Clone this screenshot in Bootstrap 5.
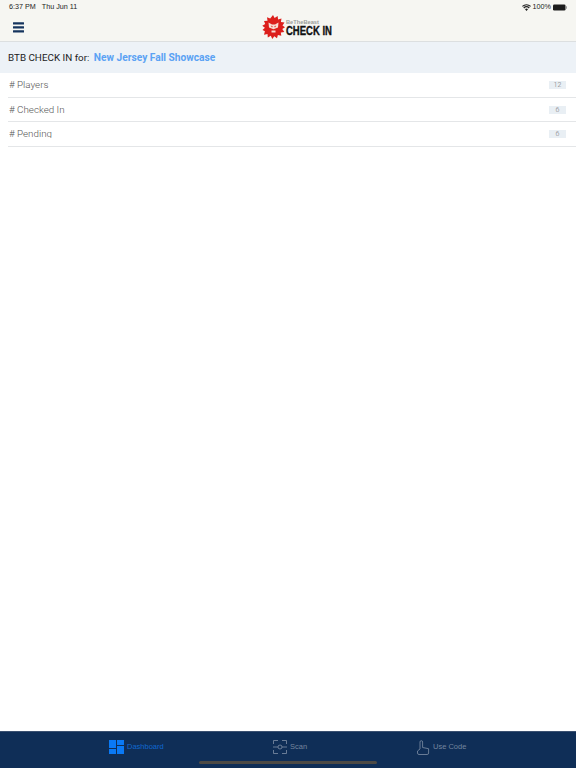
<!DOCTYPE html>
<html lang="en">
<head>
<meta charset="utf-8">
<title>BTB Check In</title>
<link href="https://cdn.jsdelivr.net/npm/bootstrap@5.3.0/dist/css/bootstrap.min.css" rel="stylesheet">
<style>
html,body{height:768px;overflow:hidden;background:#fff}
body{font-family:"Liberation Sans",Arial,sans-serif;display:flex;flex-direction:column}
.topbar{background:#f6f6f2;height:42px;border-bottom:1px solid #dcdfe0;flex:none;position:relative}
.status-row{height:14px;padding:0 9px 0 9px;font-size:7.2px;color:#222;line-height:14px}
.status-row .gap-time{margin-right:6px}
.status-icons{gap:2px}
.burger{width:11px;margin-left:13px;margin-top:8px;display:block}
.logo-wrap{position:absolute;left:262px;top:15px;height:24px}
.logo-txt{margin-left:1px;padding-top:4px}
.logo-top{font-size:5.7px;font-weight:700;color:#9a9d9a;height:6px;line-height:6px}
.logo-main{font-size:12.5px;font-weight:700;color:#111;line-height:11px;height:11px;margin-top:.5px;transform:scaleX(.76);transform-origin:left center;white-space:nowrap;-webkit-text-stroke:.35px #111;width:46px}
.event-bar{background:#edf2f7;height:31px;flex:none;padding-left:8px;font-family:Roboto,sans-serif;font-size:9.85px;line-height:31px;color:#1c1c1c}
.event-name{color:#5ba2f4;font-weight:700;margin-left:2px;font-size:10.2px}
.stat-list{padding:.5px 0 0 8px;flex:none}
.stat-row{height:24.4px;border-bottom:1px solid #e4e6e8;padding:0 10px 0 1px;font-family:Roboto,sans-serif;font-weight:300;font-size:9.8px;color:#555;overflow:hidden}
.stat-label{line-height:24px}
.stat-row:last-child .stat-label{height:16px;line-height:24px;align-self:flex-start}
.stat-num{background:#e9eff4;color:#777;font-size:7px;width:17px;height:8px;line-height:8px;text-align:center}
.spacer-main{flex:1}
.tabbar{background:#0f2e57;height:37px;flex:none;position:relative;border-top:1px solid #3a5070;font-size:7.5px;color:#74859e}
.tab-item{position:absolute;top:8px;height:14px}
.tab-dash{left:109px;color:#0f68d0;gap:3px}
.tab-scan{left:273px;gap:3px}
.tab-code{left:417px;gap:3px}
.home-ind{position:absolute;left:199px;bottom:4px;width:178px;height:3px;background:#4d4a45;border-radius:2px}
</style>
</head>
<body>
<header class="topbar">
  <div class="status-row d-flex justify-content-between align-items-center">
    <div><span class="gap-time">6:37 PM</span>Thu Jun 11</div>
    <div class="d-flex align-items-center status-icons">
      <svg width="9" height="7" viewBox="0 0 18 14"><path d="M9 14 6 10.600a4.400 4.400 0 0 1 6 0zM4.400 8.800 2.600 6.800a9.400 9.400 0 0 1 12.800 0l-1.800 2a6.800 6.800 0 0 0-9.200 0zM1.500 5.700 0 4a13.400 13.400 0 0 1 18 0l-1.500 1.700a11.200 11.200 0 0 0-15 0z" fill="#222"/></svg>
      <span>100%</span>
      <svg width="14" height="7" viewBox="0 0 14 7"><rect x="0" y="0.500" width="12.500" height="6" rx="1.300" fill="#1c1c1c"/><rect x="13" y="2.300" width="1" height="2.400" fill="#999"/></svg>
    </div>
  </div>
  <svg class="burger" width="11" height="11" viewBox="0 0 11 11"><rect width="11" height="2.400" y="0.200" rx=".4" fill="#15345e"/><rect width="11" height="2.400" y="4.200" rx=".4" fill="#15345e"/><rect width="11" height="2.400" y="8.200" rx=".4" fill="#15345e"/></svg>
  <div class="logo-wrap d-flex">
    <svg width="23" height="24" viewBox="0 0 23 24">
      <path fill="#dc1f1c" d="M11 0l1.600 3 3-2 .5 3.400 3.400-.8-.6 3.400 3.600.6-2 2.800 2.500 1.900-2.700 1.800 2 2.800-3.500.5.500 3.400-3.400-.8-.9 3.300-2.700-2-2 2.700-1.500-3.200-3 1.800-.3-3.500-3.500.6.900-3.400L.5 15l2.400-2.300L.3 10.800l2.900-1.700L2 5.900l3.500-.2L5 2.300l3.200 1.300z"/>
      <path fill="#f7dcd3" d="M6.500 7.500l3.500 2h3l3.500-2-.5 5-4.500 1.800L7 12.500z"/>
      <path fill="#dc1f1c" d="M8.800 10.500l2 1-.8 1zM14.200 10.500l-2 1 .8 1z"/>
      <rect x="9.500" y="15.500" width="4" height="2" fill="#f7dcd3"/>
    </svg>
    <div class="logo-txt">
      <div class="logo-top">BeTheBeast</div>
      <div class="logo-main">CHECK IN</div>
    </div>
  </div>
</header>
<div class="event-bar">BTB CHECK IN for: <span class="event-name">New Jersey Fall Showcase</span></div>
<div class="stat-list">
  <div class="stat-row d-flex justify-content-between align-items-center"><span class="stat-label"># Players</span><span class="stat-num">12</span></div>
  <div class="stat-row d-flex justify-content-between align-items-center"><span class="stat-label"># Checked In</span><span class="stat-num">6</span></div>
  <div class="stat-row d-flex justify-content-between align-items-center"><span class="stat-label overflow-hidden"># Pending</span><span class="stat-num">6</span></div>
</div>
<div class="spacer-main"></div>
<footer class="tabbar">
  <div class="tab-item tab-dash d-flex align-items-center">
    <svg width="15" height="14" viewBox="0 0 15 14"><g fill="#0a79f5"><rect width="7" height="8"/><rect y="9" width="7" height="5"/><rect x="8" width="7" height="5"/><rect x="8" y="6" width="7" height="8"/></g></svg>
    <span>Dashboard</span>
  </div>
  <div class="tab-item tab-scan d-flex align-items-center">
    <svg width="14" height="14" viewBox="0 0 14 14" fill="none" stroke="#7f8fa6" stroke-width=".8"><path d="M.5 4V.5H5M9 .5h4.500V4M.5 10v3.500H5M9 13.500h4.500V10M0 7h5M9 7h5"/><circle cx="7" cy="7" r="2"/></svg>
    <span>Scan</span>
  </div>
  <div class="tab-item tab-code d-flex align-items-center">
    <svg width="13" height="15" viewBox="0 0 13 15" fill="none" stroke="#7f8fa6" stroke-width=".8"><path d="M3 9V2a1.300 1.300 0 0 1 2.600 0v5.500l6 1.200v4.300a1.500 1.500 0 0 1-1.500 1.500H2a1.500 1.500 0 0 1-1.500-1.500v-2L3 9z"/></svg>
    <span>Use Code</span>
  </div>
  <div class="home-ind"></div>
</footer>
</body>
</html>
